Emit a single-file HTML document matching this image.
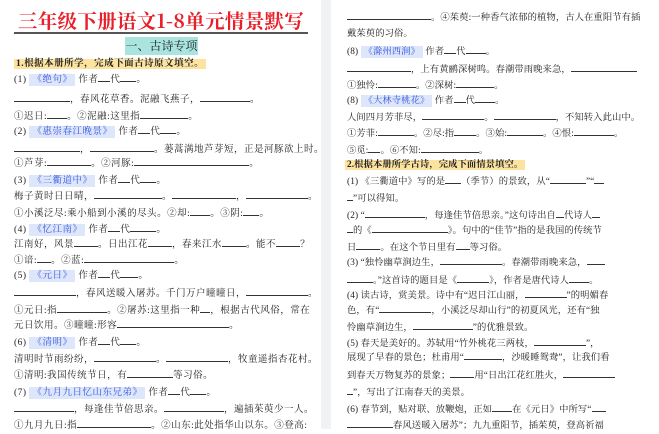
<!DOCTYPE html>
<html><head><meta charset="utf-8"><style>
*{margin:0;padding:0;box-sizing:border-box}
body{width:659px;height:429px;overflow:hidden;background:#fff;font-family:"Liberation Serif","Noto Serif CJK SC",serif;color:#222;position:relative}
.gap{position:absolute;left:321px;top:0;width:10px;height:429px;background:#f1f2f4}
.l{position:absolute;white-space:nowrap;font-size:9.5px;line-height:16px;height:16px;letter-spacing:.5px}
.L{left:14px}.R{left:347px;letter-spacing:.1px;font-size:9.3px}
.b{display:inline-block;border-bottom:1px solid #333;height:11px;vertical-align:baseline}
.t{background:#dde6fb;color:#3355dd;padding:1px 3px}
.h{background:#fde3a0;font-weight:bold;color:#222;padding:0 2px}
</style></head><body>
<div class="gap"></div>
<div style="position:absolute;left:14px;top:8px;width:294px;font-size:19.5px;font-weight:bold;color:#e8202a;letter-spacing:.3px;line-height:24px;white-space:nowrap;font-family:'Noto Serif CJK SC',serif;border-bottom:2px solid #555;text-align:center">三年级下册语文1-8单元情景默写</div>
<div style="position:absolute;left:125px;top:37px;width:73px;height:18px;background:#a9e4df;font-size:12px;line-height:18px;text-align:center;white-space:nowrap">一、古诗专项</div>
<div class="l L" style="top:56px"><span class="h">1.根据本册所学，完成下面古诗原文填空。</span></div>
<div class="l L" style="top:71px">(1) <span class="t">《绝句》</span> 作者<span class="b" style="width:12px"></span>代<span class="b" style="width:16px"></span>。</div>
<div class="l L" style="top:91px"><span class="b" style="width:56px"></span>，春风花草香。泥融飞燕子，<span class="b" style="width:50px"></span>。</div>
<div class="l L" style="top:108px">①迟日:<span class="b" style="width:20px"></span>。②泥融:这里指<span class="b" style="width:48px"></span>。</div>
<div class="l L" style="top:123px">(2) <span class="t">《惠崇春江晚景》</span> 作者<span class="b" style="width:12px"></span>代<span class="b" style="width:16px"></span>。</div>
<div class="l L" style="top:141px"><span class="b" style="width:66px"></span>，<span class="b" style="width:64px"></span>。蒌蒿满地芦芽短，正是河豚欲上时。</div>
<div class="l L" style="top:155px">①芦芽:<span class="b" style="width:44px"></span>。②河豚:<span class="b" style="width:115px"></span>。</div>
<div class="l L" style="top:172px">(3) <span class="t">《三衢道中》</span> 作者<span class="b" style="width:12px"></span>代<span class="b" style="width:16px"></span>。</div>
<div class="l L" style="top:188px">梅子黄时日日晴，<span class="b" style="width:68px"></span>。<span class="b" style="width:64px"></span>，<span class="b" style="width:62px"></span>。</div>
<div class="l L" style="top:205px">①小溪泛尽:乘小船到小溪的尽头。②却:<span class="b" style="width:20px"></span>。③阴:<span class="b" style="width:16px"></span>。</div>
<div class="l L" style="top:221px">(4) <span class="t">《忆江南》</span> 作者<span class="b" style="width:12px"></span>代<span class="b" style="width:26px"></span>。</div>
<div class="l L" style="top:236px">江南好，风景<span class="b" style="width:24px"></span>。日出江花<span class="b" style="width:24px"></span>，春来江水<span class="b" style="width:24px"></span>。能不<span class="b" style="width:24px"></span>？</div>
<div class="l L" style="top:252px">①谙:<span class="b" style="width:14px"></span>。②蓝:<span class="b" style="width:90px"></span>。</div>
<div class="l L" style="top:267px">(5) <span class="t">《元日》</span> 作者<span class="b" style="width:12px"></span>代<span class="b" style="width:18px"></span>。</div>
<div class="l L" style="top:285px"><span class="b" style="width:62px"></span>，春风送暖入屠苏。千门万户曈曈日，<span class="b" style="width:62px"></span>。</div>
<div class="l L" style="top:302px">①元日:指<span class="b" style="width:50px"></span>。②屠苏:这里指一种<span class="b" style="width:10px"></span>，根据古代风俗，常在</div>
<div class="l L" style="top:317px">元日饮用。③曈曈:形容<span class="b" style="width:112px"></span>。</div>
<div class="l L" style="top:334px">(6) <span class="t">《清明》</span> 作者<span class="b" style="width:12px"></span>代<span class="b" style="width:16px"></span>。</div>
<div class="l L" style="top:351px">清明时节雨纷纷，<span class="b" style="width:62px"></span>。<span class="b" style="width:62px"></span>，牧童遥指杏花村。</div>
<div class="l L" style="top:367px">①清明:我国传统节日，有<span class="b" style="width:46px"></span>等习俗。</div>
<div class="l L" style="top:384px">(7) <span class="t">《九月九日忆山东兄弟》</span> 作者<span class="b" style="width:12px"></span>代<span class="b" style="width:16px"></span>。</div>
<div class="l L" style="top:401px"><span class="b" style="width:60px"></span>，每逢佳节倍思亲。<span class="b" style="width:60px"></span>，遍插茱萸少一人。</div>
<div class="l L" style="top:417px">①九月九日:指<span class="b" style="width:74px"></span>。②山东:此处指华山以东。③登高:</div>

<div class="l R" style="top:9px"><span class="b" style="width:84px"></span>。④茱萸:一种香气浓郁的植物，古人在重阳节有插</div>
<div class="l R" style="top:26px">戴茱萸的习俗。</div>
<div class="l R" style="top:43px">(8) <span class="t">《滁州西涧》</span> 作者<span class="b" style="width:12px"></span>代<span class="b" style="width:20px"></span>。</div>
<div class="l R" style="top:61px"><span class="b" style="width:64px"></span>，上有黄鹂深树鸣。春潮带雨晚来急，<span class="b" style="width:66px"></span></div>
<div class="l R" style="top:77px">①独怜:<span class="b" style="width:38px"></span>。②深树:<span class="b" style="width:38px"></span>。</div>
<div class="l R" style="top:92px">(8) <span class="t">《大林寺桃花》</span> 作者<span class="b" style="width:12px"></span>代<span class="b" style="width:20px"></span>。</div>
<div class="l R" style="top:109px">人间四月芳菲尽，<span class="b" style="width:62px"></span>。<span class="b" style="width:62px"></span>，不知转入此山中。</div>
<div class="l R" style="top:125px">①芳菲:<span class="b" style="width:36px"></span>。②尽:指<span class="b" style="width:22px"></span>。③始:<span class="b" style="width:36px"></span>。④恨:<span class="b" style="width:40px"></span>。</div>
<div class="l R" style="top:142px">⑤觅:<span class="b" style="width:12px"></span>。⑥不知:<span class="b" style="width:58px"></span>。</div>
<div class="l R" style="top:157px;left:345px"><span class="h">2.根据本册所学古诗，完成下面情景填空。</span></div>
<div class="l R" style="top:173px">(1) 《三衢道中》写的是<span class="b" style="width:16px"></span>（季节）的景致，从“<span class="b" style="width:36px"></span>”“<span class="b" style="width:10px"></span></div>
<div class="l R" style="top:190px"><span class="b" style="width:6px"></span>”可以得知。</div>
<div class="l R" style="top:207px">(2) “<span class="b" style="width:60px"></span>，每逢佳节倍思亲。”这句诗出自<span class="b" style="width:8px"></span>代诗人<span class="b" style="width:8px"></span></div>
<div class="l R" style="top:222px"><span class="b" style="width:6px"></span>的《<span class="b" style="width:76px"></span>》。句中的“佳节”指的是我国的传统节</div>
<div class="l R" style="top:239px">日<span class="b" style="width:24px"></span>。在这个节日里有<span class="b" style="width:14px"></span>等习俗。</div>
<div class="l R" style="top:254px">(3) “独怜幽草涧边生，<span class="b" style="width:62px"></span>。春潮带雨晚来急，<span class="b" style="width:18px"></span></div>
<div class="l R" style="top:272px"><span class="b" style="width:26px"></span>。”这首诗的题目是《<span class="b" style="width:32px"></span>》，作者是唐代诗人<span class="b" style="width:20px"></span>。</div>
<div class="l R" style="top:287px">(4) 读古诗，赏美景。诗中有“迟日江山丽，<span class="b" style="width:42px"></span>”的明媚春</div>
<div class="l R" style="top:302px">色，有“<span class="b" style="width:52px"></span>，小溪泛尽却山行”的初夏风光，还有“独</div>
<div class="l R" style="top:319px">怜幽草涧边生，<span class="b" style="width:60px"></span>”的优雅景致。</div>
<div class="l R" style="top:335px">(5) 春天是美好的。苏轼用“竹外桃花三两枝，<span class="b" style="width:52px"></span>”，</div>
<div class="l R" style="top:349px">展现了早春的景色；杜甫用“<span class="b" style="width:38px"></span>，沙暖睡鸳鸯”，让我们看</div>
<div class="l R" style="top:367px">到春天万物复苏的景象；<span class="b" style="width:24px"></span>用“日出江花红胜火，<span class="b" style="width:52px"></span></div>
<div class="l R" style="top:384px"><span class="b" style="width:6px"></span>”，写出了江南春天的美景。</div>
<div class="l R" style="top:401px">(6) 春节到，贴对联、放鞭炮，正如<span class="b" style="width:20px"></span>在《元日》中所写“<span class="b" style="width:14px"></span></div>
<div class="l R" style="top:417px"><span class="b" style="width:46px"></span>春风送暖入屠苏”；九九重阳节，插茱萸，登高祈福</div>
</body></html>
